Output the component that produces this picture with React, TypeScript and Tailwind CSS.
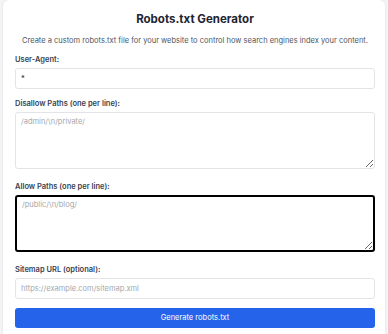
import React from "react";

const fieldCls =
  "block w-full rounded-[3px] border border-[#e2e4e8] bg-white px-[5px] text-[7.5px] text-[#222] placeholder:text-[#a3a7ae] outline-none";

export default function App() {
  return (
    <div
      className="min-h-screen bg-[#f3f4f6] px-[3px]"
      style={{ fontFamily: "Inter, 'Liberation Sans', sans-serif" }}
    >
      <div className="rounded-[6px] bg-white pl-3 pr-[10px] pt-3 pb-4 shadow-[0_0_3px_rgba(0,0,0,0.08)]">
        <h1 className="text-center text-[11.5px] font-bold leading-[14px] text-[#1f2430]">
          Robots.txt Generator
        </h1>
        <p className="mt-[10px] text-center text-[7.5px] leading-[10px] text-[#4b5563]">
          Create a custom robots.txt file for your website to control how search engines index your content.
        </p>

        <div className="mt-[9px] mb-[10px]">
          <label className="mb-[3px] block text-[7.5px] font-semibold leading-[10px] text-[#374151]">
            User-Agent:
          </label>
          <input className={`${fieldCls} h-[21px]`} defaultValue="*" />
        </div>

        <div className="mb-[13px]">
          <label className="mb-[3px] block text-[7.5px] font-semibold leading-[10px] text-[#374151]">
            Disallow Paths (one per line):
          </label>
          <textarea
            className={`${fieldCls} h-[57px] py-[4px] leading-[10px]`}
            placeholder={"/admin/\\n/private/"}
          />
        </div>

        <div className="mb-[13px]">
          <label className="mb-[3px] block text-[7.5px] font-semibold leading-[10px] text-[#374151]">
            Allow Paths (one per line):
          </label>
          <textarea
            autoFocus
            className={`${fieldCls} h-[57px] border-2 border-black py-[3px] leading-[10px]`}
            placeholder={"/public/\\n/blog/"}
          />
        </div>

        <div className="mb-[9px]">
          <label className="mb-[3px] block text-[7.5px] font-semibold leading-[10px] text-[#374151]">
            Sitemap URL (optional):
          </label>
          <input className={`${fieldCls} h-[21px]`} placeholder="https://example.com/sitemap.xml" />
        </div>

        <button className="block h-[20px] w-full rounded-[3px] bg-[#2563eb] text-[7.5px] text-white">
          Generate robots.txt
        </button>
      </div>
    </div>
  );
}
